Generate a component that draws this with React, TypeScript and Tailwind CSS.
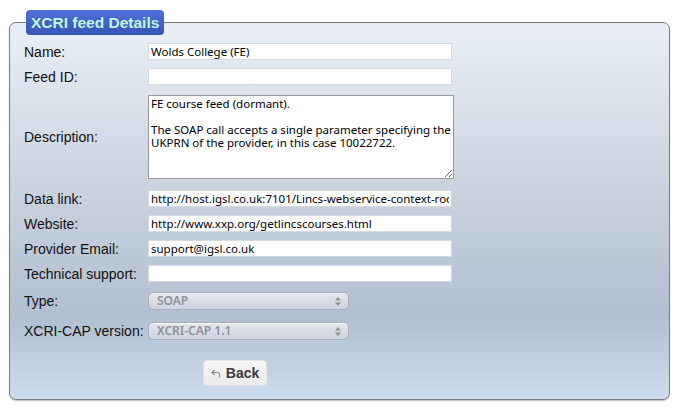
import React from "react";

const inputFont = { fontFamily: '"Noto Sans", "DejaVu Sans", sans-serif' };

const inputCls =
  "block h-[17px] w-[304px] bg-white border border-[#d5dae1] px-[2px] text-[11.5px] leading-[15px] text-black outline-none";

function Row({
  label,
  children,
  className = "",
}: {
  label: string;
  children: React.ReactNode;
  className?: string;
}) {
  return (
    <div className={"flex items-center " + className}>
      <div className="w-[124px] shrink-0 text-[14px] leading-[16px] text-[#111]">{label}</div>
      {children}
    </div>
  );
}

function Select({ value }: { value: string }) {
  return (
    <div className="relative flex h-[18px] w-[201px] items-center rounded-[5px] border border-[#a9afb8] bg-gradient-to-b from-[#e3e7ee] to-[#cdd3dc] pl-[8px] shadow-[inset_0_1px_0_rgba(255,255,255,0.6)]">
      <span className="text-[12px] leading-[16px] font-semibold text-[#8b919b]" style={inputFont}>
        {value}
      </span>
      <svg className="absolute right-[7px] top-[4px]" width="6" height="9" viewBox="0 0 6 9">
        <path d="M3 0 L6 3.5 L0 3.5 Z" fill="#8b8f96" />
        <path d="M3 9 L6 5.5 L0 5.5 Z" fill="#8b8f96" />
      </svg>
    </div>
  );
}

export default function App() {
  return (
    <div
      className="min-h-[413px] w-[683px] bg-white pl-[9px] pt-[22px]"
      style={{ fontFamily: '"Liberation Sans", Arial, sans-serif' }}
    >
      <div className="relative h-[378px] w-[661px] rounded-[7px] border border-[#7b7b7b] bg-[linear-gradient(to_bottom,#eaeff7_0%,#c9d2de_45%,#b2bfd0_78%,#cfdcee_100%)] pl-[14px] pt-[20px] shadow-[0_1px_1px_rgba(0,0,0,0.25)]">
        <div className="absolute left-[16px] top-[-13px] flex h-[25px] items-center rounded-[4px] bg-gradient-to-b from-[#4d72da] to-[#3953b6] px-[5px]">
          <span className="text-[15.5px] font-bold text-[#c2f7dd]">XCRI feed Details</span>
        </div>

        <div className="flex flex-col">
          <Row label="Name:">
            <input className={inputCls} style={inputFont} defaultValue="Wolds College (FE)" />
          </Row>
          <Row label="Feed ID:" className="mt-[8px]">
            <input className={inputCls} style={inputFont} defaultValue="" />
          </Row>
          <Row label="Description:" className="mt-[10px]">
            <textarea
              className="block h-[84px] w-[306px] resize border border-[#9a9a9a] bg-white px-[2px] py-[1px] text-[11.5px] leading-[13px] text-black outline-none"
              style={inputFont}
              defaultValue={
                "FE course feed (dormant).\n\nThe SOAP call accepts a single parameter specifying the UKPRN of the provider, in this case 10022722."
              }
            />
          </Row>
          <Row label="Data link:" className="mt-[11px]">
            <input
              className={inputCls}
              style={inputFont}
              defaultValue="http://host.igsl.co.uk:7101/Lincs-webservice-context-root/LincsWebservicePort"
            />
          </Row>
          <Row label="Website:" className="mt-[8px]">
            <input className={inputCls} style={inputFont} defaultValue="http://www.xxp.org/getlincscourses.html" />
          </Row>
          <Row label="Provider Email:" className="mt-[8px]">
            <input className={inputCls} style={inputFont} defaultValue="support@igsl.co.uk" />
          </Row>
          <Row label="Technical support:" className="mt-[8px]">
            <input className={inputCls} style={inputFont} defaultValue="" />
          </Row>
          <Row label="Type:" className="mt-[10px]">
            <Select value="SOAP" />
          </Row>
          <Row label="XCRI-CAP version:" className="mt-[12px]">
            <Select value="XCRI-CAP 1.1" />
          </Row>
          <div className="mt-[20px] pl-[179px]">
            <button className="flex h-[26px] w-[64px] items-center justify-center gap-[5px] rounded-[4px] border border-[#dfe2e6] bg-gradient-to-b from-[#f6f6f6] to-[#ececec]">
              <svg width="10" height="9" viewBox="0 0 10 9">
                <path
                  d="M3.5 1 L1 3.5 L3.5 6 M1 3.5 H6 Q8.5 3.5 8.5 6 V8.5"
                  fill="none"
                  stroke="#8c8c8c"
                  strokeWidth="1.2"
                />
              </svg>
              <span className="text-[14px] font-bold text-[#3a3a3a]">Back</span>
            </button>
          </div>
        </div>
      </div>
    </div>
  );
}
